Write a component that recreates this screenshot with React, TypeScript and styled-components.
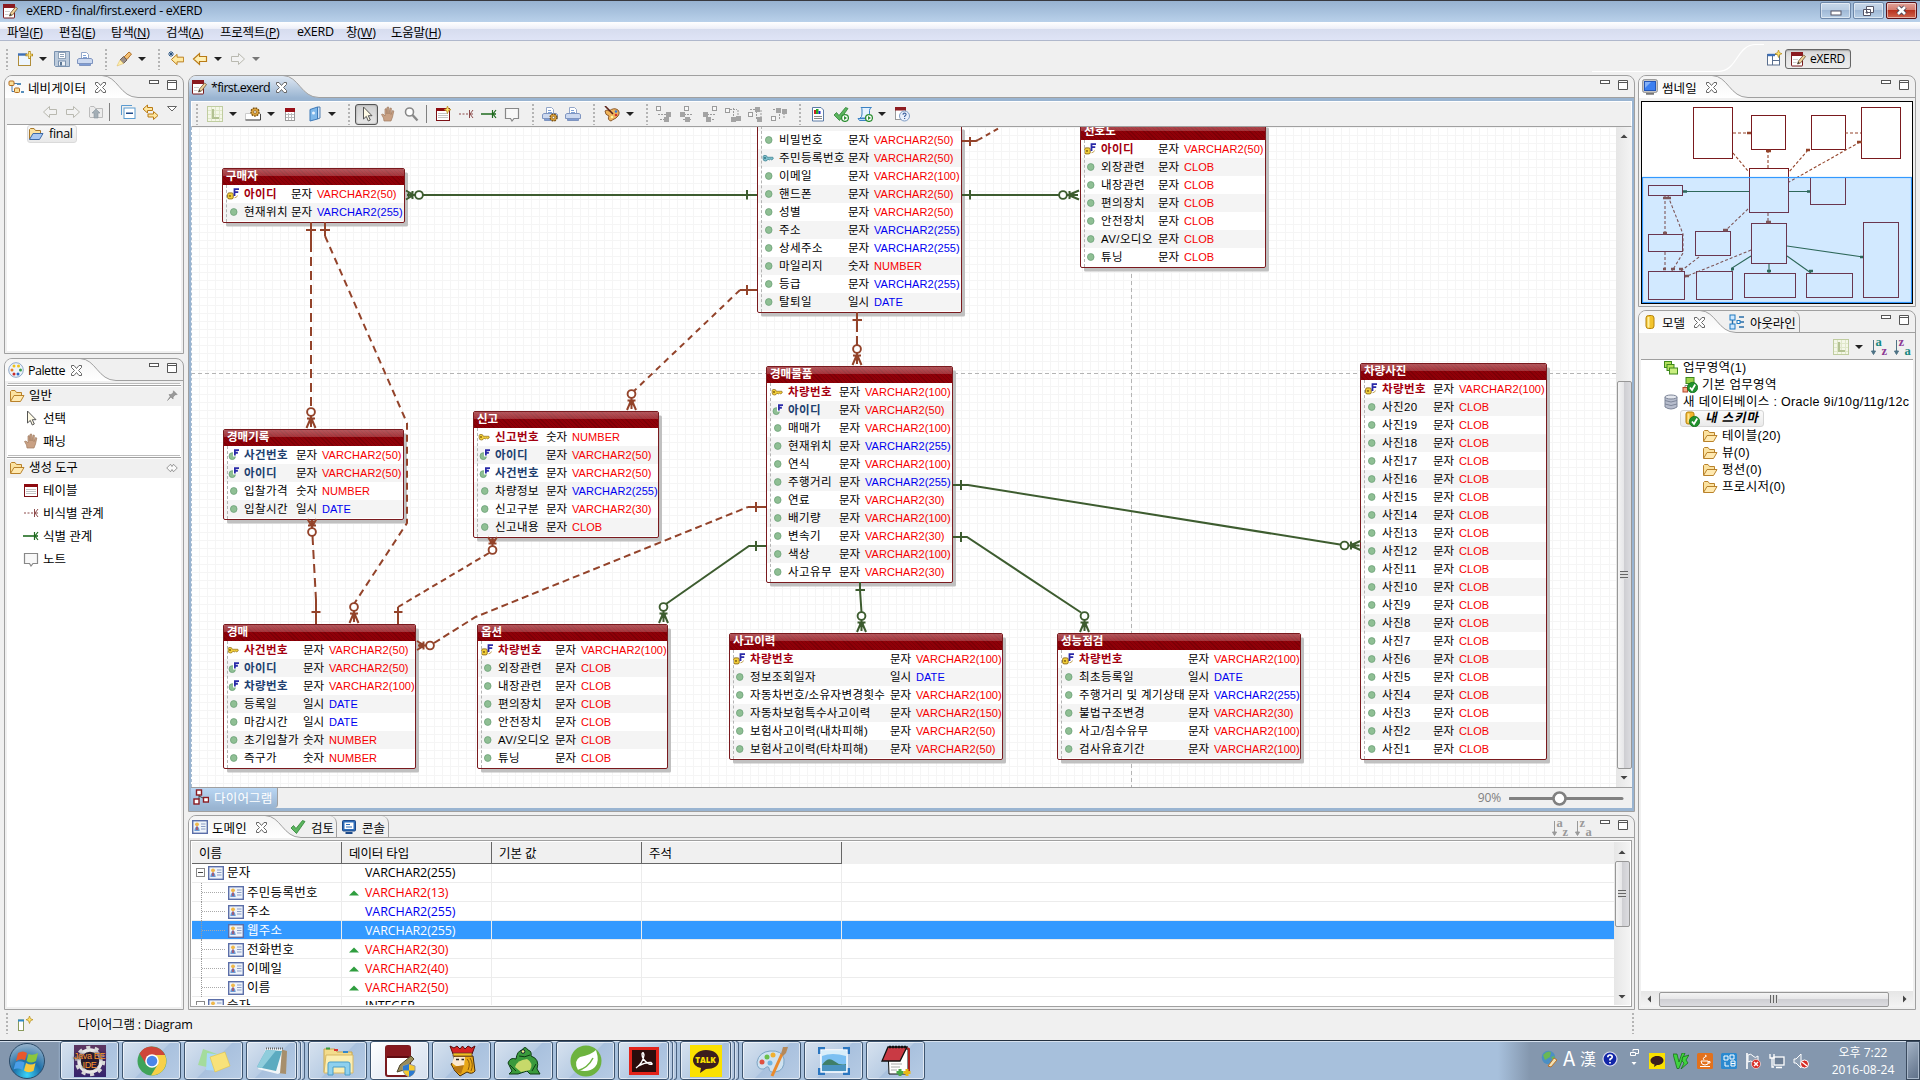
import React from "react";
import styled, { createGlobalStyle, css } from "styled-components";

const UI = '"Open Sans", "Noto Sans CJK KR", sans-serif';
const GULIM = '"Liberation Sans", "Noto Sans CJK KR", sans-serif';
const LINE = "#a0a0a0";
const FACE = "#f0f0f0";
const BROWN = "#93432a";
const GREEN = "#3d5c2f";

const Global = createGlobalStyle`
  * { box-sizing: border-box; }
  html, body { margin: 0; padding: 0; background: ${FACE}; }
  body { width: 1920px; height: 1080px; overflow: hidden; font-family: ${UI}; font-size: 12.5px; color: #000; }
  svg { display: block; flex: none; }
`;

/* ---------- icons ---------- */

type IconName = keyof typeof glyphs;

const arrowLeft = "M1.500 8L7.500 2.500V5.500H14.500V10.500H7.500V13.500Z";
const arrowRight = "M14.500 8L8.500 2.500V5.500H1.500V10.500H8.500V13.500Z";

const folder = (
  <>
    <path d="M1.500 13V3.500L2.500 2.500H6L7.500 4.500H12.500V7" fill="#fbe2a0" stroke="#b9822b" />
    <path d="M1.500 13.500L5 7.500H15L11.500 13.500Z" fill="#ffe9b0" stroke="#b9822b" />
  </>
);
const printer = (
  <>
    <path d="M4.500 8V1.500H9.500L11.500 3.500V8" fill="#fff" stroke="#93a6c8" />
    <path d="M6 4.500H9M6 6.500H10" stroke="#7fa2d6" />
    <path d="M.5 8.500L2 7.500H14L15.500 8.500V12.500H.5Z" fill="#ccd9f0" stroke="#7f95c0" />
    <path d="M2.500 12.500H13.500V14.500H2.500Z" fill="#7f9dd6" stroke="#7f95c0" />
  </>
);
const exerd = (
  <>
    <rect x="1.500" y="1.500" width="11" height="13.500" rx=".5" fill="#fff" stroke="#7a1a1e" />
    <rect x="1" y="1" width="12" height="4" fill="#8b1a20" />
    <path d="M3 8.500H8M3 11.500H6.500" stroke="#cfcfcf" />
    <path d="M7.500 13L8.500 10L13.500 4L15.500 5.500L10.500 12Z" fill="#f0d09a" stroke="#6b5434" strokeWidth=".8" />
    <path d="M7.500 13L8.300 10.700L9.800 12Z" fill="#333" />
  </>
);
const domain = (
  <>
    <rect x=".7" y="1.700" width="14.600" height="12.600" fill="#eef3fa" stroke="#5b6ea8" strokeWidth="1.400" />
    <circle cx="5" cy="5.300" r="1.900" fill="#f0b84a" />
    <path d="M2.300 12Q2.800 7.500 5 7.500T7.700 12Z" fill="#6a9ad5" />
    <path d="M5 7.500V11" stroke="#c22" />
    <path d="M9 5H13.500M9 7.500H13.500M9 10H13.500" stroke="#8b9cc4" />
  </>
);
const cursor = <path d="M4.500 1V13L7.300 10.400L9.300 15L11.300 14L9.300 9.700H13Z" fill="#fffbe6" stroke="#555" />;
const hand = (
  <path d="M4 15L3.500 12L1.500 8.500L3 8L5 10V3L6.300 2.500L7 8V1.300L8.600 1L9 8L10 2L11.400 2.300L11 8.500L12.600 4.500L13.800 5L12.500 11L11 15Z" fill="#c9a184" stroke="#a07c62" strokeWidth=".7" />
);
const note = <path d="M1.500 2.500H14.500V12.500H10L8 15L6.500 12.500H1.500Z" fill="#f8f8f8" stroke="#888" strokeWidth="1.200" />;
const relNon = (
  <>
    <path d="M1 8H10" stroke="#8c4a4a" strokeDasharray="2 1.500" />
    <path d="M11.500 4V12M11.500 8H15M15 4L12 8L15 12" stroke="#8c4a4a" fill="none" />
  </>
);
const relId = (
  <>
    <path d="M0 8H15" stroke="#1f6b1f" strokeWidth="1.600" />
    <path d="M11.500 4V12M15 4L12 8L15 12" stroke="#1f6b1f" fill="none" strokeWidth="1.200" />
  </>
);
const table = (
  <>
    <rect x="1.500" y="2.500" width="13" height="12" fill="#fff" stroke="#7b1116" />
    <rect x="1" y="2" width="14" height="3" fill="#8e0a10" />
    <path d="M3 7.500H13M3 9.500H13M3 11.500H13" stroke="#c4c4c4" />
  </>
);
const sparkle = <path d="M12.500 0L13.500 2.700L16 3.700L13.500 4.700L12.500 7.500L11.500 4.700L9 3.700L11.500 2.700Z" fill="#ffe36a" stroke="#b58b1c" strokeWidth=".7" />;
const gear = (cx: number, cy: number, r: number) => (
  <>
    <circle cx={cx} cy={cy} r={r} fill="#dca23c" stroke="#7d5412" strokeWidth="1.400" strokeDasharray="1.700 1" />
    <circle cx={cx} cy={cy} r={r * 0.35} fill="#fff" stroke="#7d5412" strokeWidth=".7" />
  </>
);
const lgrid = (
  <>
    <rect x=".5" y=".5" width="15" height="15" fill="#f4f7e8" stroke="#c0cda0" />
    <path d="M1 4.500H15M1 8.500H15M1 12.500H15M4.500 1V15M8.500 1V15M12.500 1V15" stroke="#e0e8ca" />
    <path d="M6 3V12H12" stroke="#b3c292" strokeWidth="2.200" fill="none" />
  </>
);
const okBadge = (
  <>
    <circle cx="10.500" cy="10.500" r="5.200" fill="#21912d" stroke="#0e6b18" strokeWidth=".7" />
    <path d="M8 10.500L10 13L13.200 7.500" stroke="#fff" strokeWidth="1.800" fill="none" />
  </>
);
const runBadge = (
  <>
    <circle cx="12" cy="12" r="3.400" fill="#fff" stroke="#2f8f34" strokeWidth="1.300" />
    <path d="M11 10V14L14 12Z" fill="#2f8f34" />
  </>
);
const tick = <path d="M1 9L3.500 6.500L6 9.500L12.500 1.500L15 2.500L6.500 14.500Z" fill="#5cb55f" stroke="#2f8335" strokeWidth=".8" />;

const align = (n: number) => {
  const b = [
    [[1, 1], [10, 6], [8, 11]],
    [[6, 1], [1, 6], [6, 11]],
    [[11, 1], [1, 6], [4, 11]],
    [[1, 3], [11, 10], [6, 11]],
    [[1, 7], [7, 1], [9, 11]],
    [[1, 11], [5, 2], [11, 3]],
  ][n];
  return (
    <>
      {n < 3 ? (
        <path d="M2 8.500H14M4 13.500H12" stroke="#9b9b9b" strokeDasharray="2 1" />
      ) : (
        <path d="M8.500 2V14M13 4V12M2 3.500H12" stroke="#9b9b9b" strokeDasharray="2 1" />
      )}
      <rect x={b[0][0] - 0.5} y={b[0][1] - 0.5} width="4" height="4" fill="#f8f8f8" stroke="#9b9b9b" />
      <rect x={b[1][0]} y={b[1][1]} width="5" height="5" fill="#a3a3a3" />
      <rect x={b[2][0]} y={b[2][1]} width="5" height="5" fill="#a3a3a3" />
    </>
  );
};

const glyphs = {
  exerd,
  folder,
  printer,
  domain,
  cursor,
  hand,
  note,
  relNon,
  relId,
  table,
  lgrid,
  folderOpen: (
    <>
      <path d="M1.500 13V3.500L2.500 2.500H6L7.500 4.500H12.500V7" fill="#fbe2a0" stroke="#a9782b" />
      <path d="M1.500 13.500L5 7.500H15L11.500 13.500Z" fill="#a9c8f2" stroke="#3e6ba8" />
    </>
  ),
  newWizard: (
    <>
      <rect x="1.500" y="3.500" width="12" height="11" fill="#eef6ff" stroke="#b08d3a" />
      <path d="M1 3.500H10" stroke="#3d6fb5" strokeWidth="2.400" />
      <path d="M12.500 0V8M8.500 4H16" stroke="#b58b1c" strokeWidth="2.400" />
      <path d="M12.500 1V7M9.500 4H15" stroke="#ffe98a" />
    </>
  ),
  save: (
    <>
      <path d="M.5 .5H15.500V15.500H1.500L.5 14.500Z" fill="#bccbdc" stroke="#7a92af" />
      <rect x="4.500" y="1.500" width="7" height="6" fill="#fff" stroke="#8da1b7" />
      <path d="M6 3.500H10M6 5.500H10" stroke="#8da1b7" />
      <rect x="4.500" y="10" width="7" height="5" fill="#eef2f6" stroke="#7a92af" />
      <rect x="6" y="11" width="2" height="3.500" fill="#5d7896" />
    </>
  ),
  torch: (
    <>
      <path d="M8 6L13 1L15.500 3L11 8.500Z" fill="#f4c074" stroke="#b1722a" />
      <path d="M4 9L7.500 5.500L11 9L7.500 12.500Z" fill="#9c8f88" stroke="#6f625b" />
      <path d="M1 15L4 9L7.500 12.500Z" fill="#ffefae" stroke="#e0c06a" strokeWidth=".6" />
    </>
  ),
  backEdit: (
    <>
      <path d={arrowLeft} transform="translate(2 1) scale(.94)" fill="#ffe9a0" stroke="#b97b16" />
      <path d="M3 0V6M0 3H6M1 1L5 5M5 1L1 5" stroke="#1f4c7d" strokeWidth=".9" />
    </>
  ),
  back: <path d={arrowLeft} fill="#fff0b5" stroke="#b97b16" strokeWidth="1.200" />,
  backOff: <path d={arrowLeft} fill="#f2f2f2" stroke="#b9b9b0" />,
  fwdOff: <path d={arrowRight} fill="#f2f2f2" stroke="#b9b9b0" />,
  upOff: (
    <>
      <path d="M1.500 13V3.500L2.500 2.500H6L7.500 4.500H14.500V13.500H2Z" fill="#ececec" stroke="#bbb" />
      <path d="M8 5L12 9H10V14H6V9H4Z" fill="#a3aeb6" stroke="#8a959d" strokeWidth=".6" />
    </>
  ),
  collapse: (
    <>
      <path d="M1.500 11V1.500H12" fill="none" stroke="#5b9bd0" />
      <rect x="4" y="4" width="11" height="10.500" fill="#fff" stroke="#5b9bd0" />
      <path d="M6 9.300H13" stroke="#1f4c8d" strokeWidth="1.600" />
    </>
  ),
  link: (
    <>
      <path d="M1 5L5.500 1V3.500H10.500V6.500H5.500V9Z" fill="#ffe7a0" stroke="#b97b16" />
      <path d="M16 11.500L11.500 7.500V10H6V13H11.500V15.500Z" fill="#ffe7a0" stroke="#b97b16" />
    </>
  ),
  navigator: (
    <>
      <path d="M4 6V12.500H8M6 4.500H9" stroke="#4f7ba7" fill="none" />
      <rect x="1" y="2" width="5" height="4.500" rx="1" fill="#fbe09a" stroke="#b36a1c" />
      <rect x="6.500" y="9" width="5" height="4.500" rx="1" fill="#fbe09a" stroke="#b36a1c" />
      <path d="M9 5H13M13 13H16" stroke="#1f6aa5" strokeWidth="1.500" />
    </>
  ),
  paletteRound: (
    <>
      <circle cx="8" cy="8" r="7.300" fill="#eef3fa" stroke="#8fa8c8" />
      <circle cx="6" cy="4" r="1.500" fill="#efc21a" /><circle cx="10.500" cy="4" r="1.500" fill="#efc21a" />
      <circle cx="4" cy="8" r="1.500" fill="#e4822a" /><circle cx="12.500" cy="8" r="1.500" fill="#3aa04a" />
      <circle cx="6" cy="12" r="1.500" fill="#c92b2b" /><circle cx="10" cy="12" r="1.500" fill="#2c66c4" />
    </>
  ),
  pin: <path d="M10 1L15 6L12 6.500L9.500 9.500V12L6.500 9.500L2 14L5.500 8.500L4 6H6.500L9.500 4Z" fill="#999" stroke="#777" strokeWidth=".6" />,
  chevrons: <path d="M6 3L1 8L6 13L8 10L10 13L15 8L10 3L8 6Z" fill="#fafafa" stroke="#777" />,
  gearCard: (
    <>
      <path d="M.5 7.500H15.500V14H.5Z" fill="#fff" stroke="#ccc" />
      <path d="M15.500 8V14H.5" fill="none" stroke="#444" />
      {gear(10, 6, 4)}
    </>
  ),
  smallTable: (
    <>
      <rect x="3.500" y="3.500" width="9" height="11" fill="#fff" stroke="#999" />
      <rect x="3" y="2" width="10" height="4" fill="#9a1018" />
      <path d="M4 8.500H12M4 11.500H12M6.500 7V14M9.500 7V14" stroke="#bbb" />
    </>
  ),
  book: (
    <>
      <path d="M10.500 1H13V12L10.500 13Z" fill="#cfe2f6" stroke="#5480b0" />
      <path d="M3 3.500L10.500 1V13L3 15Z" fill="#7fb8ea" stroke="#3f7ab8" />
      <circle cx="6.500" cy="7" r="1.500" fill="#eaf4ff" />
    </>
  ),
  magnifier: (
    <>
      <circle cx="6.500" cy="6" r="4" fill="#fff" stroke="#888" strokeWidth="1.600" />
      <path d="M9.500 9L14.500 14.500" stroke="#888" strokeWidth="2.400" />
    </>
  ),
  tableNew: <>{table}{sparkle}</>,
  printerGear: <>{printer}{gear(11.5, 11.5, 3.4)}</>,
  paint: (
    <>
      <path d="M1 5Q3 3 5 5Q10 1 14 4Q17 8 12 12Q8 14 7 15Q3 14 5 10Q1 9 1 5Z" fill="#f0b45a" stroke="#8d5a2c" />
      <path d="M1 0L9 8" stroke="#5b2218" strokeWidth="1.600" />
      <circle cx="12" cy="5.500" r="1.300" fill="#3b7ad0" /><circle cx="12" cy="9" r="1.300" fill="#d03030" /><circle cx="8" cy="11" r="1.300" fill="#fff6a0" />
    </>
  ),
  a0: align(0), a1: align(1), a2: align(2), a3: align(3), a4: align(4), a5: align(5),
  report: (
    <>
      <path d="M2.500 1.500H11L13.500 4V15H2.500Z" fill="#fff" stroke="#5a7ba6" />
      <rect x="4" y="4" width="2" height="4" fill="#c22" /><rect x="6" y="3" width="2.500" height="5" fill="#2a2" /><rect x="8.500" y="5" width="2" height="3" fill="#22c" />
      <path d="M4 10.500H12M4 12.500H12" stroke="#888" />
    </>
  ),
  checkRun: <>{tick}{runBadge}</>,
  scriptRun: (
    <>
      <path d="M4 1.500H14.500Q12.500 2 12.500 4.500V12H3Q5 11 5 8V4Q5 2 4 1.500Z" fill="#e4f2ff" stroke="#3b82c4" />
      <path d="M1 12.500H10V14.500H2.500Z" fill="#bfe0fa" stroke="#3b82c4" />
      {runBadge}
    </>
  ),
  helpDoc: (
    <>
      <rect x="1.500" y="1.500" width="10" height="12" fill="#fff" stroke="#999" />
      <rect x="1" y="1" width="11" height="3.500" fill="#8e1c20" />
      <circle cx="10.500" cy="10" r="5" fill="#e9f0fb" stroke="#7f9cc4" />
      <path d="M9 8.700Q9 7.200 10.500 7.200Q12.200 7.200 12 8.700Q11.800 9.600 10.600 10.300V11M10.600 12V13" stroke="#3f64a0" strokeWidth="1.200" fill="none" />
    </>
  ),
  perspective: (
    <>
      <rect x="1.500" y="4.500" width="12" height="10.500" fill="#fff" stroke="#5a6f8e" />
      <path d="M1.500 5H9" stroke="#3c6fb7" strokeWidth="2.400" />
      <path d="M6.500 6V15M6.500 10.500H13.500" stroke="#5a6f8e" />
      {sparkle}
    </>
  ),
  monitor: (
    <>
      <rect x=".7" y=".7" width="14.600" height="12.600" rx="1.500" fill="#d4d4d4" stroke="#8a8a8a" />
      <rect x="2.500" y="2.500" width="11" height="9" fill="#3c7ff0" stroke="#2456b8" />
      <path d="M3 3H9L3 9Z" fill="#84b1f8" />
      <path d="M4 14.800H12" stroke="#777" strokeWidth="1.800" />
    </>
  ),
  model: (
    <>
      <rect x="4" y="1.500" width="8" height="13" rx="2.500" fill="#f2c32c" stroke="#b5830e" />
      <rect x="5.500" y="3" width="2" height="10.500" fill="#fff0a0" />
    </>
  ),
  outline: (
    <>
      <path d="M3.500 5V12M10 3H15M10 8H15M10 13H15" stroke="#2a6ea8" strokeWidth="1.400" />
      <rect x="1" y="1" width="5" height="5" fill="#cfe8ff" stroke="#1d79c0" /><rect x="1" y="10" width="5" height="5" fill="#cfe8ff" stroke="#1d79c0" />
      <rect x="8" y="6.500" width="3" height="3" fill="#fff" stroke="#1d79c0" />
    </>
  ),
  check: tick,
  console: (
    <>
      <rect x="1.500" y="1.500" width="13" height="10.500" rx="1" fill="#2d6cb8" stroke="#1d4a8a" />
      <rect x="3.500" y="3.500" width="9" height="6.500" fill="#fff" />
      <path d="M5 5.500H9M5 8H11" stroke="#2d6cb8" />
      <path d="M4.500 14H11.500" stroke="#1d4a8a" strokeWidth="1.800" />
    </>
  ),
  area: (
    <>
      <rect x="1.500" y="1.500" width="7" height="6" fill="#b4e05c" stroke="#3f8a1b" />
      <rect x="4" y="4.500" width="7" height="6" fill="#b4e05c" stroke="#3f8a1b" />
      <rect x="6.500" y="8" width="8" height="6" fill="#c9ee80" stroke="#3f8a1b" />
    </>
  ),
  areaOk: (
    <>
      <rect x="4" y="0.500" width="8" height="6" fill="#9ed24c" stroke="#3f8a1b" />
      <rect x="1" y="10.500" width="4.500" height="4.500" fill="#f6a888" stroke="#b5482a" />
      <path d="M8 7V9M3 10V8.500H8" stroke="#888" fill="none" />
      {okBadge}
    </>
  ),
  database: (
    <>
      <path d="M2 3V13Q8 17 14 13V3Z" fill="#b6bccc" stroke="#7d8598" />
      <ellipse cx="8" cy="3" rx="6" ry="2" fill="#e4e7ee" stroke="#7d8598" />
      <path d="M2 6.500Q8 9.500 14 6.500M2 10Q8 13 14 10" stroke="#7d8598" fill="none" />
    </>
  ),
  schemaOk: (
    <>
      <rect x="2" y="1" width="8" height="12" rx="2" fill="#f2b52c" stroke="#b5830e" />
      <rect x="3.500" y="2.500" width="2" height="9" fill="#ffe690" />
      {okBadge}
    </>
  ),
  diagram: (
    <>
      <path d="M6 5V10M6 7L12 10" stroke="#444" fill="none" />
      <rect x="3.500" y="1" width="5" height="5" fill="#fff" stroke="#8b1a20" strokeWidth="1.400" />
      <rect x="1" y="10" width="5" height="5" fill="#fff" stroke="#8b1a20" strokeWidth="1.400" />
      <rect x="10.500" y="8.500" width="5" height="4.500" fill="#fff" stroke="#8b1a20" strokeWidth="1.400" />
    </>
  ),
  statusNew: (
    <>
      <rect x="1.500" y="4" width="5" height="10.500" fill="#fff" stroke="#8a9a5c" />
      <path d="M1 4.500H7" stroke="#2d8ac8" strokeWidth="2" />
      {sparkle}
    </>
  ),
  dot: <ellipse cx="9" cy="8" rx="4.400" ry="4.600" fill="#8fbf94" stroke="#6a9f76" strokeWidth="1" />,
  key: (
    <>
      <path d="M1.500 6Q1.500 4.500 4 4.500Q7 4.500 7 7H14.500L15 9L13 10.500L11.500 9.500L10 10.500L8 9.500Q7 12 4.500 12Q1.500 12 1.500 9Z" fill="#f2cf3a" stroke="#94701a" />
      <circle cx="4" cy="8" r="1.200" fill="#7a5a10" />
    </>
  ),
  ukey: (
    <>
      <path d="M1.500 6Q1.500 4.500 4 4.500Q7 4.500 7 7H14.500L15 9L13 10.500L11.500 9.500L10 10.500L8 9.500Q7 12 4.500 12Q1.500 12 1.500 9Z" fill="#7cc0cc" stroke="#3b7f90" />
      <circle cx="4" cy="8" r="1.200" fill="#2d6a78" />
    </>
  ),
  fk: (
    <>
      <ellipse cx="7" cy="9.500" rx="4.300" ry="4.600" fill="#8fbf94" stroke="#6a9f76" />
      <path d="M8 0H16V3H12V5H15V7.500H12V10H8Z" fill="#fff" />
      <path d="M10.500 8.500V1.500H16M10 5H14.500" stroke="#2a2aa8" strokeWidth="2.400" fill="none" />
    </>
  ),
  pfk: (
    <>
      <rect x=".8" y="6.500" width="7.500" height="8" rx="2" fill="#f2cf3a" stroke="#94701a" strokeWidth="1.300" />
      <circle cx="4" cy="10.500" r="1.300" fill="#7a5a10" />
      <path d="M10 10.500V1.500H16M10 5.500H15" stroke="#2a2aa8" strokeWidth="2.400" fill="none" />
      <path d="M10 13Q13 13 14 10" stroke="#b18a20" fill="none" />
    </>
  ),
};

const Icon = ({ n, s = 16 }: { n: IconName; s?: number }) => (
  <svg width={s} height={s} viewBox="0 0 16 16" fill="none">{glyphs[n]}</svg>
);

const SortBox = styled.span<{ $off?: boolean }>`
  display: grid; grid-template-columns: 5px 6px 6px; grid-template-rows: 9px 9px; width: 17px; height: 18px; margin-top: ${(p) => (p.$off ? 3 : 0)}px;
  font: bold 12.5px/9px "Liberation Serif", serif; color: ${(p) => (p.$off ? "#9a9a9a" : "#16877f")};
  svg { grid-row: 1 / 3; }
  i { font-style: normal; }
  i + i { grid-column: 3; grid-row: 2; color: ${(p) => (p.$off ? "#9a9a9a" : "#8d3b94")}; }
  &[data-rev] i { color: ${(p) => (p.$off ? "#9a9a9a" : "#8d3b94")}; }
  &[data-rev] i + i { color: ${(p) => (p.$off ? "#9a9a9a" : "#16877f")}; }
`;
const Sort = ({ rev, off }: { rev?: boolean; off?: boolean }) => (
  <SortBox $off={off} data-rev={rev ? "" : undefined}>
    <svg width="5" height="18" viewBox="0 0 5 18"><path d="M2.500 2V15M.5 13L2.500 16.500L4.500 13Z" stroke={off ? "#999" : "#4f7385"} fill={off ? "#999" : "#4f7385"} /></svg>
    <i>{rev ? "z" : "a"}</i><i>{rev ? "a" : "z"}</i>
  </SortBox>
);

/* ---------- toolbar parts ---------- */

const Slot = styled.span<{ $g?: number; $w?: number }>`
  flex: none; display: flex; justify-content: center; align-items: center;
  width: ${(p) => p.$w ?? 16}px; margin-left: ${(p) => p.$g ?? 7}px;
`;
const GripLine = styled.span<{ $g: number; $h?: number }>`
  flex: none; width: 4px; height: ${(p) => p.$h ?? 21}px; margin-left: ${(p) => p.$g}px;
  background: repeating-linear-gradient(#b4b4b4 0 2px, transparent 2px 4px) 1px 0 / 2px 100% no-repeat;
`;
const Sep = styled.span<{ $g: number }>`
  flex: none; width: 2px; height: 18px; margin-left: ${(p) => p.$g}px; border-left: 1px solid #808080;
`;
const Caret = styled.span<{ $g: number; $off?: boolean }>`
  flex: none; width: 8px; height: 4px; margin-left: ${(p) => p.$g}px;
  background: ${(p) => (p.$off ? "#777" : "#222")}; clip-path: polygon(0 0, 100% 0, 50% 100%);
`;
const Tool = ({ n, g }: { n: IconName; g?: number }) => <Slot $g={g}><Icon n={n} /></Slot>;

/* ---------- window frame ---------- */

const Window = styled.div`
  width: 1920px; height: 1080px; display: flex; flex-direction: column; background: ${FACE}; overflow: hidden; white-space: nowrap;
`;
const TitleBar = styled.header`
  height: 22px; border-top: 1px solid #38393f; background: linear-gradient(#97b2d1, #b9d1ea);
  display: flex; align-items: center; padding: 0 3px 2px 2px; letter-spacing: -0.3px;
  > span { margin-left: 8px; flex: 1; }
`;
const WinButton = styled.button<{ $close?: boolean }>`
  width: 31px; height: 17px; margin-left: 2px; padding: 0; border-radius: 2px; display: flex; align-items: center; justify-content: center;
  border: 1px solid ${(p) => (p.$close ? "#5a1016" : "#6d87a8")};
  box-shadow: inset 0 0 0 1px rgba(255, 255, 255, 0.5);
  background: ${(p) => p.$close ? "linear-gradient(#e0a39a, #d3796b 48%, #b8321f 50%, #d0654e)" : "linear-gradient(#c8d8ea, #b8cce2 48%, #a0b9d6 50%, #b8cfe6)"};
`;
const MenuBar = styled.nav`
  height: 19px; background: linear-gradient(#fff, #eef0f8 36%, #d6dcee 38%, #dfe4f6); border-bottom: 1px solid #b0b8cc;
  display: flex; align-items: center; padding-left: 7px;
`;
const MenuItem = styled.span<{ $w: number }>`flex: none; width: ${(p) => p.$w}px; letter-spacing: -0.2px;`;
const MainBar = styled.div`
  height: 34px; display: flex; align-items: center; padding-top: 2px;
`;
const PerspectiveBar = styled.div`
  margin-left: auto; display: flex; align-items: center; height: 34px; margin-top: -2px; width: 328px;
  > svg:first-child { margin-right: 2px; }
`;
const PerspectiveButton = styled.button`
  width: 66px; height: 20px; margin: 1px 0 0 3px; padding: 0 0 0 4px; display: flex; align-items: center; gap: 4px;
  border: 1px solid #666; border-radius: 3px; background: linear-gradient(#d4d4d4, #e4e4e4 40%, #ededed);
  box-shadow: inset 0 1px 1px #aaa; font: 12px ${UI}; letter-spacing: -0.3px; color: #000;
`;
const Workbench = styled.main`
  height: 935px; display: flex; padding: 0 4px 0 4px;
`;
const Column = styled.div<{ $w: number; $ml?: number; $gap: number }>`
  flex: none; width: ${(p) => p.$w}px; margin-left: ${(p) => p.$ml ?? 0}px; display: flex; flex-direction: column; gap: ${(p) => p.$gap}px;
`;
const Panel = styled.section<{ $h: number }>`
  flex: none; height: ${(p) => p.$h}px; border: 1px solid ${LINE}; border-radius: 8px 8px 0 0; background: ${FACE};
  display: flex; flex-direction: column; overflow: hidden;
`;
const Head = styled.div`
  flex: none; height: 22px; display: flex; align-items: stretch;
`;
const Tab = styled.div<{ $blue?: boolean; $w: number; $ls?: number; $x?: number }>`
  width: ${(p) => p.$w}px; flex: none; display: flex; align-items: center; padding-left: ${(p) => (p.$blue ? 2 : 3)}px; letter-spacing: ${(p) => p.$ls ?? 0.1}px;
  background: ${(p) => (p.$blue ? "linear-gradient(#dfe8f3, #99b4d1)" : "linear-gradient(#f4f4f4, #fff)")};
  > b { font-weight: 400; margin: 0 ${(p) => p.$x ?? 9}px 0 4px; }
  > svg { position: relative; z-index: 1; }
`;
const HeadRest = styled.div`
  flex: 1; border-bottom: 1px solid ${LINE}; display: flex; align-items: flex-start; min-width: 0;
`;
const IdleTab = styled.div<{ $w: number; $ml?: number }>`
  width: ${(p) => p.$w}px; margin-left: ${(p) => p.$ml ?? 0}px; height: 21px; display: flex; align-items: center; gap: 5px;
  border-right: 1px solid ${LINE}; border-radius: 0 7px 0 0; padding-top: 1px; letter-spacing: -0.1px;
`;
const ViewButtons = styled.div`
  margin-left: auto; display: flex; gap: 8px; padding: 4px 6px 0 0;
`;
const CloseX = () => (
  <svg width="11" height="11" viewBox="0 0 11 11"><path d="M.5 .5H3L5.500 3.500L8 .5H10.500V2.500L7.500 5.500L10.500 8.500V10.500H8L5.500 7.500L3 10.500H.5V8.500L3.500 5.500L.5 2.500Z" fill="#fff" stroke="#666" /></svg>
);
const MinMax = () => (
  <ViewButtons>
    <svg width="10" height="5"><rect x=".5" y=".5" width="9" height="3" fill="#fff" stroke="#555" /></svg>
    <svg width="10" height="10"><path d="M.5 .5H9.500V9.500H.5ZM.5 2.500H9.500" fill="#fff" stroke="#555" /></svg>
  </ViewButtons>
);
const Curve = ({ blue }: { blue?: boolean }) => (
  <svg width="36" height="22" viewBox="0 0 36 22">
    <defs>
      <linearGradient id={blue ? "cb" : "cw"} x1="0" y1="0" x2="0" y2="1">
        <stop offset="0" stopColor={blue ? "#dfe8f3" : "#f4f4f4"} /><stop offset="1" stopColor={blue ? "#99b4d1" : "#fff"} />
      </linearGradient>
    </defs>
    <path d="M0 0C16 0 18 21.500 36 21.500V22H0Z" fill={`url(#${blue ? "cb" : "cw"})`} />
    <path d="M0 -.5C16 0 18 21.500 36 21.500" fill="none" stroke={LINE} />
  </svg>
);

const White = styled.div<{ $bare?: boolean }>`
  flex: 1; background: #fff; margin: ${(p) => (p.$bare ? 3 : 0)}px 2px 2px; border-top: ${(p) => (p.$bare ? "0" : `1px solid ${LINE}`)};
  min-height: 0; display: flex; flex-direction: column;
`;
const ViewBar = styled.div<{ $h: number }>`
  flex: none; height: ${(p) => p.$h}px; display: flex; align-items: center; padding-top: 2px;
`;
const FinalNode = styled.div`
  width: 50px; height: 18px; margin: 0 0 0 20px; display: flex; align-items: center; gap: 5px; border: 1px solid #dadada; border-radius: 3px;
  background: linear-gradient(#f8f8f8, #e9e9e9); letter-spacing: -0.3px; line-height: 14px; padding-bottom: 1px;
`;

/* ---------- palette ---------- */

const Drawer = styled.div<{ $h: number }>`
  height: ${(p) => p.$h}px; margin-top: 1px; border-top: 1px solid ${LINE}; box-shadow: 0 -2px 0 -1px #fff, 0 -3px 0 -1px #bbb; padding-top: 1px;
`;
const DrawerHead = styled.div`
  height: 19px; background: ${FACE}; display: flex; align-items: center; padding: 0 0 2px 2px; letter-spacing: -0.1px;
  > b { font-weight: 400; flex: 1; margin-left: 4px; line-height: 16px; }
`;
const PaletteItem = styled.div`
  height: 23px; display: flex; align-items: center; gap: 4px; padding-left: 16px; letter-spacing: 0;
`;

/* ---------- diagram ---------- */

type Kind = "dot" | "key" | "ukey" | "fk" | "pfk";
type Col = [Kind, string, string, string];
interface Entity { t: string; x: number; y: number; w: number; n: number; k: number; d: number; cols: Col[]; cut?: boolean }

const V = (n: number) => `VARCHAR2(${n})`;
const M = "문자";
const clobs = (names: string[]): Col[] => names.map((s) => ["dot", s, M, "CLOB"]);
const options = ["외장관련", "내장관련", "편의장치", "안전장치", "AV/오디오", "튜닝"];

const entities: Entity[] = [
  { t: "구매자", x: 222, y: 168, w: 183, n: 244, k: 291, d: 317, cols: [["pfk", "아이디", M, V(50)], ["dot", "현재위치", M, V(255)]] },
  { t: "", cut: true, x: 757, y: 125, w: 205, n: 779, k: 848, d: 874, cols: [
    ["dot", "비밀번호", M, V(50)], ["ukey", "주민등록번호", M, V(50)], ["dot", "이메일", M, V(100)], ["dot", "핸드폰", M, V(50)], ["dot", "성별", M, V(50)],
    ["dot", "주소", M, V(255)], ["dot", "상세주소", M, V(255)], ["dot", "마일리지", "숫자", "NUMBER"], ["dot", "등급", M, V(255)], ["dot", "탈퇴일", "일시", "DATE"]] },
  { t: "선호도", x: 1080, y: 123, w: 186, n: 1101, k: 1158, d: 1184, cols: [["pfk", "아이디", M, V(50)], ...clobs(options)] },
  { t: "경매기록", x: 223, y: 429, w: 181, n: 244, k: 296, d: 322, cols: [["fk", "사건번호", M, V(50)], ["fk", "아이디", M, V(50)], ["dot", "입찰가격", "숫자", "NUMBER"], ["dot", "입찰시간", "일시", "DATE"]] },
  { t: "신고", x: 473, y: 411, w: 186, n: 495, k: 546, d: 572, cols: [["key", "신고번호", "숫자", "NUMBER"], ["fk", "아이디", M, V(50)], ["fk", "사건번호", M, V(50)], ["dot", "차량정보", M, V(255)], ["dot", "신고구분", M, V(30)], ["dot", "신고내용", M, "CLOB"]] },
  { t: "경매", x: 223, y: 624, w: 193, n: 244, k: 303, d: 329, cols: [["key", "사건번호", M, V(50)], ["fk", "아이디", M, V(50)], ["fk", "차량번호", M, V(100)], ["dot", "등록일", "일시", "DATE"], ["dot", "마감시간", "일시", "DATE"], ["dot", "초기입찰가", "숫자", "NUMBER"], ["dot", "즉구가", "숫자", "NUMBER"]] },
  { t: "옵션", x: 477, y: 624, w: 191, n: 498, k: 555, d: 581, cols: [["pfk", "차량번호", M, V(100)], ...clobs(options)] },
  { t: "경매물품", x: 766, y: 366, w: 187, n: 788, k: 839, d: 865, cols: [["key", "차량번호", M, V(100)], ["fk", "아이디", M, V(50)], ["dot", "매매가", M, V(100)], ["dot", "현재위치", M, V(255)], ["dot", "연식", M, V(100)], ["dot", "주행거리", M, V(255)], ["dot", "연료", M, V(30)], ["dot", "배기량", M, V(100)], ["dot", "변속기", M, V(30)], ["dot", "색상", M, V(100)], ["dot", "사고유무", M, V(30)]] },
  { t: "사고이력", x: 729, y: 633, w: 274, n: 750, k: 890, d: 916, cols: [["pfk", "차량번호", M, V(100)], ["dot", "정보조회일자", "일시", "DATE"], ["dot", "자동차번호/소유자변경횟수", M, V(100)], ["dot", "자동차보험특수사고이력", M, V(150)], ["dot", "보험사고이력(내차피해)", M, V(50)], ["dot", "보험사고이력(타차피해)", M, V(50)]] },
  { t: "성능점검", x: 1057, y: 633, w: 244, n: 1079, k: 1188, d: 1214, cols: [["pfk", "차량번호", M, V(100)], ["dot", "최초등록일", "일시", "DATE"], ["dot", "주행거리 및 계기상태", M, V(255)], ["dot", "불법구조변경", M, V(30)], ["dot", "사고/침수유무", M, V(100)], ["dot", "검사유효기간", M, V(100)]] },
  { t: "차량사진", x: 1360, y: 363, w: 187, n: 1382, k: 1433, d: 1459, cols: [["pfk", "차량번호", M, V(100)], ...clobs(Array.from({ length: 20 }, (_, i) => `사진${20 - i}`))] },
];

const OX = 191;
const OY = 127;

const Canvas = styled.div`
  position: relative; flex: 1; overflow: hidden; background: #fff; border-left: 1px dashed #a9bcd0;
  > svg { position: absolute; left: -1px; top: 0; }
`;
const EntityBox = styled.article<{ $x: number; $y: number; $w: number }>`
  position: absolute; left: ${(p) => p.$x - OX - 1}px; top: ${(p) => p.$y - OY}px; width: ${(p) => p.$w}px;
  border: 1px solid #7a1a1e; border-radius: 2px; box-shadow: 3.5px 4px 0 -0.5px #c0c0c0; background: #fff; font-family: ${GULIM}; overflow: hidden;
`;
const EntityTitle = styled.h3`
  margin: 0; height: 16px; padding-left: 3px; color: #fff; font: bold 11.5px/15px ${GULIM}; letter-spacing: 0;
  background: linear-gradient(rgba(255, 255, 255, 0.34), rgba(255, 255, 255, 0.2) 45%, transparent 46%),
    repeating-linear-gradient(45deg, #8f0008 0 2px, #7c0006 2px 3px);
`;
const CutRow = styled.div`height: 5px; background: #f4f4f4;`;
const Fields = styled.div`
  position: relative; padding-bottom: 1px;
  &::before { content: ""; position: absolute; left: 3px; top: 0; bottom: 0; border-left: 1px dashed #b5b5b5; z-index: 1; }
`;
const nameTone = css<{ $kind: Kind }>`
  ${(p) => (p.$kind === "key" || p.$kind === "pfk") && css`font-weight: 700; color: #a3000f;`}
  ${(p) => p.$kind === "fk" && css`font-weight: 700; color: #21406f;`}
`;
const Field = styled.div<{ $cols: string; $alt: boolean }>`
  display: grid; grid-template-columns: ${(p) => p.$cols}; height: 18px; align-items: center; padding-bottom: 1px;
  background: ${(p) => (p.$alt ? "#f4f4f4" : "#fff")}; font-size: 11.5px; line-height: 16px;
  > svg { justify-self: end; margin: 0 5px 0 0; }
`;
const FieldName = styled.span<{ $kind: Kind }>`letter-spacing: 0.4px; ${nameTone}`;
const DataType = styled.span<{ $blue: boolean }>`
  font-size: 11px; letter-spacing: 0.08px; color: ${(p) => (p.$blue ? "#0000f0" : "#f60000")};
`;

const EntityView = ({ e }: { e: Entity }) => (
  <EntityBox $x={e.x} $y={e.y} $w={e.w}>
    {!e.cut && <EntityTitle>{e.t}</EntityTitle>}
    <Fields>
      {e.cut && <CutRow />}
      {e.cols.map(([kind, name, group, type], i) => (
        <Field key={i} $alt={i % 2 === 1} $cols={`${e.n - e.x - 1}px ${e.k - e.n}px ${e.d - e.k}px 1fr`}>
          <Icon n={kind} s={12} />
          <FieldName $kind={kind}>{name}</FieldName>
          <span>{group}</span>
          <DataType $blue={type === "DATE" || type === "VARCHAR2(255)"}>{type}</DataType>
        </Field>
      ))}
    </Fields>
  </EntityBox>
);

const Crow = ({ x, y, r, l = 12, c }: { x: number; y: number; r: number; l?: number; c: string }) => (
  <g transform={`translate(${x} ${y}) rotate(${r})`} stroke={c} fill="none">
    <path d={`M4 0H${l + 3}M6.500 -4V4M5.500 0L${l + 4} -4.500M5.500 0L${l + 4} 4.500`} strokeWidth="2" />
    <path d="M7 -2L11 2M7 2L11 -2" strokeWidth="1.500" />
    <circle r="3.900" fill="#fff" strokeWidth="1.900" />
  </g>
);

const Grid = () => {
  let d = "";
  for (let i = 0; i < 178; i++) d += `M${Math.round(191 + i * 8.1) + 0.5} 127V787`;
  for (let i = 0; i < 83; i++) d += `M191 ${Math.round(126.5 + i * 8.1) + 0.5}H1616`;
  return (
    <svg width="1425" height="660" viewBox="191 127 1425 660" fill="none">
      <path d={d} stroke="#f5f5f5" />
      <path d="M191 373.500H1616M1131.500 127V787" stroke="#b4b4b4" strokeDasharray="4 3" />
    </svg>
  );
};

const Links = () => (
  <svg width="1425" height="660" viewBox="191 127 1425 660" fill="none">
    <g stroke={BROWN} strokeWidth="2">
      <path d="M311 222V243M306 230H316M325 222V236M320 230H330M316 600V624M311.500 612H320.500M398 607V624M394 612H402.500M748 507H766M756 502V512M740 290H757M747 285V295M857 312V332M852.500 320H862M962 141H976L978 140M970 137V146" />
      <g strokeDasharray="9 5">
        <path d="M311 243V408" />
        <path d="M325 236L407 423V523L354 604" strokeDasharray="7 5" />
        <path d="M312.500 536L316 600" />
        <path d="M489 553L398 607" strokeDasharray="6 4" />
        <path d="M434 643L475.500 617L748 507" strokeDasharray="7 4" />
        <path d="M740 290L634 391" strokeDasharray="6 5" />
        <path d="M857 336V346" />
        <path d="M978 140L1001 127" strokeDasharray="5 4" />
      </g>
    </g>
    <g stroke={GREEN} strokeWidth="2">
      <path d="M423 195H757M747 190V199.500M962 195H1060M970 190V199.500" />
      <path d="M766 546H749L666 604M756 541V551M860 582V590L861.500 612M855.500 590H865M953 537H967L1081 612.500M961 532V542M953 485H968L1340 544.500M961 480V490" />
    </g>
    <Crow x={311} y={412} r={90} c={BROWN} />
    <Crow x={354} y={607} r={90} c={BROWN} />
    <Crow x={312} y={532} r={-90} l={9} c={BROWN} />
    <Crow x={492.5} y={550} r={-90} l={9} c={BROWN} />
    <Crow x={430} y={645.5} r={180} l={9} c={BROWN} />
    <Crow x={631.5} y={394} r={90} c={BROWN} />
    <Crow x={857} y={349} r={90} c={BROWN} />
    <Crow x={419} y={195} r={180} l={9} c={GREEN} />
    <Crow x={1063} y={195} r={0} c={GREEN} />
    <Crow x={663.5} y={607} r={90} c={GREEN} />
    <Crow x={861.5} y={616} r={90} c={GREEN} />
    <Crow x={1084.5} y={616} r={90} c={GREEN} />
    <Crow x={1344.5} y={545.5} r={0} c={GREEN} />
  </svg>
);

/* ---------- scrollbars ---------- */

const Track = styled.div<{ $h?: boolean }>`
  flex: none; display: flex; align-items: center;
  ${(p) => (p.$h
    ? "flex-direction: row; height: 16px; margin-top: auto; background: linear-gradient(#e6e6e6, #f4f4f4);"
    : "flex-direction: column; width: 16px; background: linear-gradient(90deg, #e6e6e6, #f4f4f4);")}
`;
const Thumb = styled.div<{ $h?: boolean; $len: number; $at: number }>`
  border: 1px solid #979797; border-radius: 2px; display: flex; align-items: center; justify-content: center; flex: none;
  ${(p) => p.$h
    ? css`height: 15px; width: ${p.$len}px; margin-left: ${p.$at}px; background: linear-gradient(#f4f4f4, #e6e6e8 48%, #cfcfd3 50%, #dcdce0);`
    : css`width: 15px; height: ${p.$len}px; margin-top: ${p.$at}px; background: linear-gradient(90deg, #f4f4f4, #e6e6e8 48%, #cfcfd3 50%, #dcdce0);`}
`;
const ThumbGrip = styled.i<{ $h?: boolean }>`
  width: 8px; height: 8px; background: repeating-linear-gradient(${(p) => (p.$h ? "90deg" : "180deg")}, #666 0 1px, #ddd 1px 3px);
`;
const Arrow = ({ d }: { d: "up" | "down" | "left" | "right" }) => (
  <svg width="8" height="8" viewBox="0 0 8 8">
    <path d={{ up: "M0.500 6H7.500L4 2.500Z", down: "M0.500 2H7.500L4 5.500Z", left: "M6 0.500V7.500L2.500 4Z", right: "M2 0.500V7.500L5.500 4Z" }[d]} fill="#444" />
  </svg>
);
const ArrowSlot = styled.span<{ $h: number; $end?: boolean }>`
  height: ${(p) => p.$h}px; display: flex; align-items: center; ${(p) => p.$end && "margin-top: auto;"}
`;

/* ---------- editor ---------- */

const BlueFrame = styled.div`
  flex: 1; border: solid #99b4d1; border-width: 3px 2px 3px 2px; display: flex; flex-direction: column; min-height: 0;
`;
const EditorBar = styled.div`
  flex: none; height: 26px; display: flex; align-items: center; border: 1px solid #fff; border-bottom-color: ${LINE};
`;
const PressedTool = styled.span`
  flex: none; width: 23px; height: 21px; margin-left: 4px; display: flex; align-items: center; justify-content: center;
  border: 1px solid #555; border-radius: 3px; background: linear-gradient(#d0d0d0, #e8e8e8); box-shadow: inset 0 0 2px #888;
`;
const Sheet = styled.div`height: 660px; flex: none; display: flex; align-items: stretch;`;
const EditorFoot = styled.div`
  flex: 1; border-top: 1px solid ${LINE}; display: flex; align-items: center; min-height: 0;
`;
const PageTab = styled.div`
  width: 87px; height: 100%; background: linear-gradient(#b9d6f3, #99b4d1); color: #fff; display: flex; align-items: center; gap: 5px; padding: 0 0 2px 2px;
  border-right: 1px solid ${LINE}; border-radius: 0 0 4px 0; letter-spacing: 0.2px;
`;
const ZoomLabel = styled.span`margin-left: auto; color: #808080; font-size: 12px; letter-spacing: -0.1px; margin-right: 8px; padding-bottom: 1px;`;

const Editor = () => (
  <Panel $h={737}>
    <Head>
      <Tab $blue $w={94} $ls={-0.62} $x={6}><Icon n="exerd" /><b>*first.exerd</b><CloseX /></Tab>
      <Curve blue />
      <HeadRest><MinMax /></HeadRest>
    </Head>
    <BlueFrame>
      <EditorBar>
        <GripLine $g={3} /><Tool n="lgrid" g={8} /><Caret $g={6} /><Tool n="gearCard" g={8} /><Caret $g={6} /><Tool n="smallTable" g={7} /><Tool n="book" g={9} /><Caret $g={5} />
        <GripLine $g={11} /><PressedTool><Icon n="cursor" /></PressedTool><Tool n="hand" g={2} /><Tool n="magnifier" /><Sep $g={7} />
        <Tool n="tableNew" /><Tool n="relNon" /><Tool n="relId" /><Tool n="note" />
        <GripLine $g={11} /><Tool n="printerGear" /><Tool n="printer" />
        <GripLine $g={11} /><Tool n="paint" g={8} /><Caret $g={6} />
        <GripLine $g={11} /><Tool n="a0" /><Tool n="a1" /><Tool n="a2" /><Tool n="a3" /><Tool n="a4" /><Tool n="a5" />
        <GripLine $g={11} /><Tool n="report" g={8} /><Tool n="checkRun" /><Tool n="scriptRun" g={8} /><Caret $g={5} /><Tool n="helpDoc" g={8} />
      </EditorBar>
      <Sheet>
        <Canvas>
          <Grid />
          {entities.map((e) => <EntityView key={e.t} e={e} />)}
          <Links />
        </Canvas>
        <Track>
          <ArrowSlot $h={17}><Arrow d="up" /></ArrowSlot>
          <Thumb $len={388} $at={237}><ThumbGrip /></Thumb>
          <ArrowSlot $h={18} $end><Arrow d="down" /></ArrowSlot>
        </Track>
      </Sheet>
      <EditorFoot>
        <PageTab><Icon n="diagram" /><span>다이어그램</span></PageTab>
        <ZoomLabel>90%</ZoomLabel>
        <svg width="123" height="18" viewBox="0 0 123 18"><path d="M1 9.500H113" stroke="#808080" strokeWidth="3" strokeLinecap="round" /><circle cx="50.500" cy="9.500" r="6" fill="#fff" stroke="#808080" strokeWidth="2.600" /></svg>
      </EditorFoot>
    </BlueFrame>
  </Panel>
);

/* ---------- domain view ---------- */

const DomainFrame = styled.div`
  flex: 1; margin: 2px 2px 2px 1px; border: 1px solid ${LINE}; background: #fff; padding: 1px; display: flex; min-height: 0;
`;
const DomainTable = styled.div`flex: 1; overflow: hidden; min-width: 0; display: flex; flex-direction: column;`;
const cells = css`display: grid; grid-template-columns: 150px 150px 150px 200px 1fr;`;
const DomainHead = styled.div`
  ${cells} flex: none; height: 22px; background: ${FACE};
  > span { height: 22px; padding-left: 7px; line-height: 23px; border-right: 1px solid #666; border-bottom: 1px solid #666; letter-spacing: -0.1px; }
`;
const DomainRow = styled.div<{ $sel?: boolean }>`
  ${cells} flex: none; height: 19px; border-bottom: 1px solid #ececec;
  background: ${(p) => (p.$sel ? "#3399ff" : "#fff")};
  > span { border-right: 1px solid #ececec; display: flex; align-items: center; min-width: 0; line-height: 16px; padding-bottom: 1px; }
  > span:last-child { border-right: 0; }
`;
const NameCell = styled.span<{ $root?: boolean; $sel?: boolean }>`
  gap: 3px; color: ${(p) => (p.$sel ? "#fff" : "#000")}; letter-spacing: 0.3px;
  padding-left: ${(p) => (p.$root ? 4 : 9)}px;
`;
const TreeLead = styled.i`
  width: 24px; height: 19px; flex: none; border-left: 1px dotted #999;
  background: repeating-linear-gradient(90deg, #aaa 0 1px, transparent 1px 2px) 0 9px / 100% 1px no-repeat;
`;
const Expander = styled.i`
  width: 9px; height: 9px; flex: none; border: 1px solid #888; background: linear-gradient(#444, #444) 1px 3px / 5px 1px no-repeat #fff;
`;
const TypeCell = styled.span<{ $c: string }>`
  padding-left: 7px; gap: 6px; color: ${(p) => p.$c}; letter-spacing: -0.1px;
`;
const domainRows: [string, string, string, boolean][] = [
  ["문자", "VARCHAR2(255)", "#000", false],
  ["주민등록번호", "VARCHAR2(13)", "#f60000", true],
  ["주소", "VARCHAR2(255)", "#0000f0", false],
  ["웹주소", "VARCHAR2(255)", "#fff", false],
  ["전화번호", "VARCHAR2(30)", "#f60000", true],
  ["이메일", "VARCHAR2(40)", "#f60000", true],
  ["이름", "VARCHAR2(50)", "#f60000", true],
  ["숫자", "INTEGER", "#000", false],
];
const Domain = () => (
  <Panel $h={195}>
    <Head>
      <Tab $w={76}><Icon n="domain" /><b>도메인</b><CloseX /></Tab>
      <Curve />
      <HeadRest>
        <IdleTab $w={47} $ml={-11}><Icon n="check" />검토</IdleTab>
        <IdleTab $w={52}><Slot $g={4}><Icon n="console" /></Slot>콘솔</IdleTab>
        <Slot $g={1162} $w={18}><Sort off /></Slot><Slot $g={5} $w={18}><Sort rev off /></Slot>
        <MinMax />
      </HeadRest>
    </Head>
    <DomainFrame>
      <DomainTable>
        <DomainHead><span>이름</span><span>데이터 타입</span><span>기본 값</span><span>주석</span></DomainHead>
        {domainRows.map(([name, type, c, up], i) => (
          <DomainRow key={name} $sel={i === 3}>
            <NameCell $root={i === 0 || i === 7} $sel={i === 3}>
              {i === 0 || i === 7 ? <Expander /> : <TreeLead />}
              <Icon n="domain" />{name}
            </NameCell>
            <TypeCell $c={c}><svg width="10" height="6" viewBox="0 0 10 6">{up && <path d="M0 5.500H10L5 0.500Z" fill="#2f9e3f" />}</svg>{type}</TypeCell>
            <span /><span /><span />
          </DomainRow>
        ))}
      </DomainTable>
      <Track>
        <ArrowSlot $h={19}><Arrow d="up" /></ArrowSlot>
        <Thumb $len={66} $at={0}><ThumbGrip /></Thumb>
        <ArrowSlot $h={17} $end><Arrow d="down" /></ArrowSlot>
      </Track>
    </DomainFrame>
  </Panel>
);

/* ---------- right column ---------- */

const thumbRects = [
  [52, 6, 39, 51], [110, 14, 34, 34], [170, 14, 34, 34], [220, 6, 39, 51], [108, 67, 39, 44], [7, 84, 34, 10], [169, 76, 35, 27], [7, 133, 34, 17],
  [54, 130, 35, 24], [110, 122, 35, 40], [222, 121, 35, 75], [7, 170, 36, 28], [55, 170, 36, 28], [103, 172, 51, 24], [165, 172, 46, 24],
];
const ThumbFrame = styled.div`
  width: 272px; height: 203px; margin: 3px 0 0 2px; border: 1px solid #000; background: #fff; overflow: hidden;
`;
const Thumbnail = () => (
  <Panel $h={232}>
    <Head>
      <Tab $w={73}><Icon n="monitor" /><b>썸네일</b><CloseX /></Tab>
      <Curve />
      <HeadRest><MinMax /></HeadRest>
    </Head>
    <ThumbFrame>
      <svg width="270" height="201" viewBox="1 1 270 201" fill="none">
        {thumbRects.map(([x, y, w, h], i) => <rect key={i} x={x + 0.5} y={y + 0.5} width={w} height={h} stroke="#7a1a1e" fill="#fff" />)}
        <g stroke={BROWN} strokeDasharray="3 2" strokeWidth="1.100">
          <path d="M92 32H110M204 32H220M92 52L107 70M127 49V67M167 49L148 71M219 41L148 81M24 95V133M27 95L42 133V152L31 170M24 151V170M107 108L84 130M127 112V122M58 156L40 170M110 149L44 176" />
          <path d="M216 41H221M165 49H169M125 50H130M125 121H130M22 97H30M22 132H26M22 168H25M30 168H34M38 168H42M44 175H48M82 129H87M106 32H110" strokeWidth="2.500" strokeDasharray="none" />
        </g>
        <g stroke="#2d5a2c" strokeWidth="1.100">
          <path d="M42 90.500H108M148 90.500H169M146 145L222 156M110 155L91 167V170M128 163V172M146 155L170 172" />
          <path d="M42 90.500H46M166 90.500H169M90 168H93M126 170H130M168 170H172M219 156H222" strokeWidth="2.500" />
        </g>
        <rect x="1.500" y="76.500" width="269" height="125" fill="#3399ff" fillOpacity=".22" stroke="#3399ff" strokeWidth="1.200" />
      </svg>
    </ThumbFrame>
  </Panel>
);

const Tree = styled.div`margin-top: -1px; font-family: ${GULIM}; letter-spacing: 0.33px;`;
const TreeRow = styled.div<{ $d: number }>`
  height: 17px; display: flex; align-items: center; gap: 4px; padding-left: ${(p) => p.$d}px; line-height: 16px;
`;
const SchemaNode = styled.div`
  height: 17px; width: 84px; margin-left: 39px; padding-left: 3px; display: flex; align-items: center; gap: 6px; border: 1px solid #d5d5d5; border-radius: 3px;
  background: linear-gradient(#fafafa, #eaeaea); font-weight: 700; line-height: 15px; letter-spacing: 0.8px;
  > i { transform: skewX(-12deg); font-style: normal; }
`;
const Model = () => (
  <Panel $h={700}>
    <Head>
      <Tab $w={61}><Icon n="model" /><b>모델</b><CloseX /></Tab>
      <Curve />
      <HeadRest>
        <IdleTab $w={71} $ml={-7}><Icon n="outline" />아웃라인</IdleTab>
        <MinMax />
      </HeadRest>
    </Head>
    <ViewBar $h={26}>
      <Slot $g={194}><Icon n="lgrid" /></Slot><Caret $g={6} /><Slot $g={7} $w={18}><Sort /></Slot><Slot $g={5} $w={18}><Sort rev /></Slot>
    </ViewBar>
    <White>
      <Tree>
        <TreeRow $d={22}><Icon n="area" />업무영역(1)</TreeRow>
        <TreeRow $d={41}><Icon n="areaOk" />기본 업무영역</TreeRow>
        <TreeRow $d={22}><Icon n="database" />새 데이터베이스 : Oracle 9i/10g/11g/12c</TreeRow>
        <SchemaNode><Icon n="schemaOk" /><i>내 스키마</i></SchemaNode>
        {["테이블(20)", "뷰(0)", "펑션(0)", "프로시저(0)"].map((s) => <TreeRow key={s} $d={61}><Icon n="folder" />{s}</TreeRow>)}
      </Tree>
      <Track $h>
        <Slot $g={0}><Arrow d="left" /></Slot>
        <Thumb $h $len={230} $at={2}><ThumbGrip $h /></Thumb>
        <Slot $g={8}><Arrow d="right" /></Slot>
      </Track>
    </White>
  </Panel>
);

/* ---------- left column ---------- */

const Navigator = () => (
  <Panel $h={279}>
    <Head>
      <Tab $w={97}><Icon n="navigator" /><b>네비게이터</b><CloseX /></Tab>
      <Curve />
      <HeadRest><MinMax /></HeadRest>
    </Head>
    <ViewBar $h={26}>
      <Tool n="backOff" g={37} /><Tool n="fwdOff" /><Tool n="upOff" /><Sep $g={5} /><Tool n="collapse" g={9} /><Tool n="link" g={6} />
      <Slot $g={9} $w={10}><svg width="10" height="16"><path d="M.5 2.500H9.500L5 7Z" fill="#fff" stroke="#666" /></svg></Slot>
    </ViewBar>
    <White><FinalNode><Icon n="folderOpen" />final</FinalNode></White>
  </Panel>
);
const Palette = () => (
  <Panel $h={652}>
    <Head>
      <Tab $w={75} $ls={-0.5} $x={6}><Icon n="paletteRound" /><b>Palette</b><CloseX /></Tab>
      <Curve />
      <HeadRest><MinMax /></HeadRest>
    </Head>
    <White $bare>
      <Drawer $h={71}>
        <DrawerHead><Icon n="folder" /><b>일반</b><Icon n="pin" s={12} /><Slot $g={0} $w={3} /></DrawerHead>
        <PaletteItem><Icon n="cursor" />선택</PaletteItem>
        <PaletteItem><Icon n="hand" />패닝</PaletteItem>
      </Drawer>
      <Drawer $h={200}>
        <DrawerHead><Icon n="folder" /><b>생성 도구</b><Icon n="chevrons" s={12} /><Slot $g={0} $w={3} /></DrawerHead>
        <PaletteItem><Icon n="table" />테이블</PaletteItem>
        <PaletteItem><Icon n="relNon" />비식별 관계</PaletteItem>
        <PaletteItem><Icon n="relId" />식별 관계</PaletteItem>
        <PaletteItem><Icon n="note" />노트</PaletteItem>
      </Drawer>
    </White>
  </Panel>
);

/* ---------- status bar and taskbar ---------- */

const Status = styled.footer`
  height: 30px; display: flex; align-items: center; letter-spacing: -0.15px; padding-bottom: 3px;
  > b { font-weight: 400; margin-left: 45px; flex: 1; }
`;
const Taskbar = styled.div`
  height: 40px; display: flex; border-top: 1px solid #23303f; box-shadow: inset 0 1px 0 #d6e1ee;
  background: linear-gradient(90deg, #8497ae 0 58px, #a7c0dc 62px 1498px, #8497ae 1530px);
`;
const StartCell = styled.div`width: 60px; display: flex; align-items: center; padding-left: 8px;`;
const TaskStack = styled.div`
  width: 59px; margin-right: 3px; display: flex;
`;
const TaskEdge = styled.i`
  width: 4px; border: 1px solid #4a6280; border-left-color: #d6e1ee; border-radius: 0 3px 3px 0; background: #b4c8e0;
`;
const TaskButton = styled.div<{ $on?: boolean }>`
  flex: 1; display: flex; align-items: center; justify-content: center; border: 1px solid #3e5570; border-radius: 3px;
  box-shadow: inset 0 0 0 1px rgba(255, 255, 255, 0.6);
  background: ${(p) => (p.$on ? "linear-gradient(135deg, #fff, #e4ebf4 60%, #d5e0ee)" : "linear-gradient(135deg, #d7e2ef, #b9cde4 50%, #a9c1de 52%, #b6cbe4)")};
`;
const EclipseTile = styled.div`
  width: 32px; height: 32px; display: grid; place-items: center; background: linear-gradient(#5d3560, #35246e);
  > * { grid-area: 1 / 1; }
  > b { z-index: 1; font: 9px/9px "Liberation Sans", sans-serif; letter-spacing: -0.3px; color: #ff9a2b; text-align: center; text-shadow: 0 0 1px #2b1a3c, 0 0 2px #2b1a3c, 0 0 3px #2b1a3c; white-space: pre; }
`;
const TalkTile = styled.div`
  width: 32px; height: 32px; background: #fae100; display: grid; place-items: center;
  > * { grid-area: 1 / 1; }
  > b { z-index: 1; font: 800 8px/8px "Open Sans", sans-serif; color: #fae100; margin-top: -2px; }
`;
const Tray = styled.div`
  margin-left: auto; width: 379px; display: flex; align-items: center; color: #fff;
`;
const TrayGlyph = styled.span<{ $s: number; $g: number; $w: number }>`
  width: ${(p) => p.$w}px; margin-left: ${(p) => p.$g}px; font: ${(p) => p.$s}px/24px "Noto Sans CJK TC", sans-serif; text-align: center; margin-top: -6px;
`;
const Raise = styled.span<{ $g: number }>`display: flex; margin: -4px 0 0 ${(p) => p.$g}px; width: 16px;`;
const Clock = styled.div`
  width: 84px; margin-left: 12px; text-align: center; font-size: 12px; line-height: 17px; letter-spacing: 0; padding-bottom: 0;
`;
const ShowDesktop = styled.div`
  margin-left: auto; align-self: stretch; width: 14px; border: 1px solid #3a4a5e; box-shadow: inset 0 0 0 1px #a9b8ca; background: linear-gradient(135deg, #a5b4c7, #5d6f87);
`;

const taskIcons: React.ReactNode[] = [
  <EclipseTile>
    <svg width="32" height="32" viewBox="0 0 32 32"><circle cx="16" cy="16" r="11" fill="#2b2030" stroke="#e8e8e8" strokeWidth="3.500" /><circle cx="16" cy="16" r="13.500" fill="none" stroke="#d8d8d8" strokeWidth="3.500" strokeDasharray="4 4.500" /></svg>
    <b>{"Java EE\nIDE"}</b>
  </EclipseTile>,
  <svg width="30" height="30" viewBox="0 0 30 30">
    <circle cx="15" cy="15" r="14.500" fill="#3fa35a" />
    <path d="M2.500 7.500A14.500 14.500 0 0 1 28 9H15L9 18Z" fill="#cf4539" />
    <path d="M28 9A14.500 14.500 0 0 1 14 29.500L21 18L18 9Z" fill="#f6d048" />
    <circle cx="15" cy="15" r="6.800" fill="#fff" /><circle cx="15" cy="15" r="5.300" fill="#4a86e8" />
  </svg>,
  <svg width="34" height="30" viewBox="0 0 34 30">
    <path d="M1 19L6 3L20 8L14 22Z" fill="#a4dc9c" /><path d="M9 24L10 7L25 9L22 25Z" fill="#a9d8f8" /><path d="M13 11L28 6L33 20L18 26Z" fill="#f8e27a" stroke="#e0c245" strokeWidth=".6" />
  </svg>,
  <svg width="32" height="30" viewBox="0 0 32 30">
    <path d="M24 3L31 5L30 28L22 27Z" fill="#a78f6c" /><path d="M10 2L26 3L24 27L22 28L2 23Z" fill="#f2f6f8" /><path d="M10 4L26 5L20 25L1 21Z" fill="#5cabc0" /><path d="M10 4L20 4.500L6 22L1 21Z" fill="#8fcddc" />
    <path d="M10 2.500H27" stroke="#666" strokeWidth="2" strokeDasharray="1 1" />
  </svg>,
  <svg width="32" height="30" viewBox="0 0 32 30">
    <path d="M2 26V3H13L15 6H30V26Z" fill="#f3dc8c" stroke="#c9a64c" /><path d="M4 9H31V27H2Z" fill="#fbeeb2" stroke="#d7b765" />
    <rect x="4" y="1.500" width="4" height="2" fill="#3a9a3a" /><rect x="12" y="3" width="4" height="2" fill="#d33" /><rect x="21" y="5" width="5" height="2" fill="#38c" />
    <path d="M6 29V18Q6 16 8 16H26Q28 16 28 18V29H23V21H11V29Z" fill="#8ed0ee" stroke="#4a9dc8" />
  </svg>,
  <svg width="32" height="32" viewBox="0 0 32 32">
    <rect x="2" y="1" width="24" height="30" rx="2" fill="#fff" stroke="#7a1a1e" strokeWidth="2" /><rect x="2" y="1" width="24" height="12" fill="#86181e" /><path d="M3 12H25" stroke="#5e0a10" strokeWidth="2" />
    <path d="M13 27L16 20L27 11L30 14L20 25Z" fill="#9a8d5a" stroke="#4c452a" />
    <path d="M19 21L25 19L31 21V26Q30 30 25 32Q20 30 19 26Z" fill="#f6c92e" stroke="#999" /><path d="M19 21L25 19V25.500H19ZM25 25.500H31Q30 30 25 32Z" fill="#2b7ad0" />
  </svg>,
  <svg width="28" height="32" viewBox="0 0 28 32">
    <path d="M6 11H25L27 26Q24 30 19 27L12 31L7 26L3 19L6 17Z" fill="#e8a818" stroke="#4a2e08" />
    <path d="M2 1L5 9H24L27 1L23.500 3L20 1L17 4L14.500 1L12 4L9 1L6 3Z" fill="#d62424" stroke="#5a0a0a" /><rect x="5" y="8" width="19" height="3" fill="#f0c020" stroke="#533" strokeWidth=".7" />
    <path d="M6 12H17L16 21L8 21L4 18Z" fill="#fbe9d0" /><path d="M8 14.500H11M13.500 14.500H16" stroke="#222" strokeWidth="1.300" />
    <path d="M5 22L16 20L13 29L8 27Z" fill="#b87812" /><path d="M19 14Q23 18 20 25M22 13Q26 19 23 26" stroke="#8a5a0c" fill="none" />
  </svg>,
  <svg width="34" height="30" viewBox="0 0 34 30">
    <path d="M2 28L5 25L1 17Q3 11 9 13Q10 5 15 4Q18 -1 21 4Q25 5 24 10Q33 13 30 23L33 28H23L20 25L11 28Z" fill="#3a9a3c" stroke="#0e3c14" /><path d="M8 21Q10 14 20 13Q27 17 23 24L14 26Z" fill="#c7d96a" />
    <circle cx="16" cy="5.500" r="1.800" fill="#f4f08a" stroke="#123" /><path d="M12 10Q18 12 23 9M3 19L9 25M29 18L25 25" stroke="#0e3c14" fill="none" />
  </svg>,
  <svg width="32" height="32" viewBox="0 0 32 32">
    <circle cx="16" cy="16" r="15.500" fill="#6db33f" /><path d="M26 5Q30 17 25 22Q19 28 8 25Q3 16 10 12Q21 10 26 5Z" fill="#fff" /><path d="M7 26Q18 23 23 13" stroke="#6db33f" strokeWidth="1.500" fill="none" />
  </svg>,
  <svg width="30" height="28" viewBox="0 0 30 28">
    <rect x="1.500" y="1.500" width="27" height="25" fill="#2a0d0c" stroke="#e2231a" strokeWidth="3" /><path d="M7 21Q14 16 15 8Q14 4 13 7Q13 13 20 17Q25 18 22 15.500Q17 15 9 19" fill="none" stroke="#fff" strokeWidth="1.400" />
  </svg>,
  <TalkTile>
    <svg width="32" height="32" viewBox="0 0 32 32"><path d="M16 5C24 5 29 9 29 15S24 24 16 24L10 28L11 23C6 22 3 19 3 15S8 5 16 5Z" fill="#3b1e1e" /></svg>
    <b>TALK</b>
  </TalkTile>,
  <svg width="34" height="32" viewBox="0 0 34 32">
    <path d="M2 17Q4 7 15 6Q27 5 29 14Q30 26 20 27Q14 28 14 23Q13 20 9 24Q2 25 2 17Z" fill="#cfe2f0" stroke="#7ba4c4" />
    <circle cx="7" cy="17" r="2.500" fill="#e05040" /><circle cx="12" cy="12" r="2.500" fill="#6abf4b" /><circle cx="18" cy="10" r="2.500" fill="#f0b030" /><circle cx="15" cy="18" r="2.500" fill="#6fb4e0" />
    <path d="M17 31L27 9" stroke="#e98a2c" strokeWidth="3" /><path d="M26 9L28 2L33 2L31 8L28 11Z" fill="#b5895a" />
  </svg>,
  <svg width="32" height="28" viewBox="0 0 32 28">
    <rect x="3" y="3" width="26" height="22" fill="#7cc0f2" stroke="#fff" strokeWidth="1.500" /><path d="M4 9Q14 5 28 9V4H4Z" fill="#d8eefa" /><path d="M4 18Q10 9 16 14T28 17V24H4Z" fill="#3f7f68" /><rect x="4" y="18" width="24" height="6" fill="#4a94c0" />
    <path d="M1 7V1H7M25 1H31V7M31 21V27H25M7 27H1V21" stroke="#2a76c0" strokeWidth="2.500" fill="none" />
  </svg>,
  <svg width="32" height="32" viewBox="0 0 32 32">
    <path d="M8 4H28V29H9Z" fill="#fff" stroke="#111" /><path d="M27 3L29 4V28" stroke="#a22" strokeWidth="2" fill="none" /><path d="M8 2H27L20 16H2Z" fill="#c93a44" stroke="#111" strokeWidth="1.300" /><path d="M9 2H27" stroke="#111" strokeWidth="2.500" strokeDasharray="2 1" />
    <path d="M11 19H22M11 22H20M11 25H17" stroke="#aaa" /><path d="M20 24V31M16.500 27.500H23.500" stroke="#48a848" strokeWidth="3" /><path d="M27 24V31M23.500 27.500H30.500" stroke="#e8b818" strokeWidth="3" />
  </svg>,
];
const stacked = [3, 9, 10];

const TrayIcons = () => (
  <>
    <Raise $g={0}>
      <svg width="16" height="18" viewBox="0 0 16 18"><circle cx="7.500" cy="7.500" r="6.800" fill="#4b8fc4" /><path d="M2 5Q6 0 10 2L9 7L4 10ZM10 7L14 6L12 11Z" fill="#6ab855" /><path d="M7 16L13 8L16 10L10 17Z" fill="#f4e0b0" stroke="#b5722a" /></svg>
    </Raise>
    <TrayGlyph $s={20} $g={2} $w={20}>A</TrayGlyph>
    <TrayGlyph $s={16} $g={0} $w={18}>漢</TrayGlyph>
    <Raise $g={5}>
      <svg width="16" height="16" viewBox="0 0 16 16"><circle cx="8" cy="8" r="7" fill="#1226a8" stroke="#dde" strokeWidth="1.200" /><path d="M5.800 6.200Q5.800 4 8 4Q10.400 4 10.200 6.200Q10 7.500 8 8.400V9.600M8 11V12.600" stroke="#fff" strokeWidth="1.700" fill="none" /></svg>
    </Raise>
    <Slot $g={12} $w={9}>
      <svg width="9" height="24" viewBox="0 3 9 24"><path d="M.5 6.500H5.500V9.500H.5ZM3 5.500V3.500H8.500V7.500H6" stroke="#fff" fill="none" /><path d="M1.500 16H6.500L4 19Z" fill="#fff" /></svg>
    </Slot>
    <Slot $g={10}><svg width="16" height="16" viewBox="0 0 16 16"><rect width="16" height="16" fill="#fae100" /><path d="M8 3C12 3 14.500 5 14.500 7.500S12 12 8 12L5 14L5.500 11.500C3 11 1.500 9.500 1.500 7.500S4 3 8 3Z" fill="#3b1e1e" /></svg></Slot>
    <Slot $g={8}><svg width="16" height="16" viewBox="0 0 16 16"><path d="M0 1H4L6 9L9 0H12L6 15.500H4Z" fill="#3fd23f" stroke="#116611" strokeWidth=".7" /><path d="M9.500 4L16 2L13 7L15 10L8 16L11 10L9 8Z" fill="#3fd23f" stroke="#116611" strokeWidth=".7" /></svg></Slot>
    <Slot $g={8}><svg width="16" height="16" viewBox="0 0 16 16"><rect width="16" height="16" rx="1.500" fill="#e2711d" /><path d="M4 8H11V11Q8 13 5 11ZM11 8.500H13V10H11M3 13.500H13M7 7Q5 5 8 4T8 2" stroke="#fff" fill="none" /></svg></Slot>
    <Slot $g={8}><svg width="16" height="16" viewBox="0 0 16 16"><rect width="16" height="16" rx="1.500" fill="#2b8ad0" /><path d="M3 3H7V7H3ZM9 2H13V6H9ZM4 9V13H8M10 8H14V13H10ZM10 10.500H14" stroke="#fff" fill="none" /></svg></Slot>
    <Slot $g={8}><svg width="16" height="16" viewBox="0 0 16 16"><path d="M2 0V16" stroke="#fff" strokeWidth="1.600" /><path d="M3 2Q6 0 8 3T13 3V10Q10 11 8 9T3 9Z" fill="#8fa0b4" stroke="#fff" /><circle cx="11" cy="11" r="4.500" fill="#d62a22" stroke="#fff" strokeWidth=".6" /><path d="M9 9L13 13M13 9L9 13" stroke="#fff" strokeWidth="1.500" /></svg></Slot>
    <Slot $g={8}><svg width="16" height="16" viewBox="0 0 16 16"><rect x="5" y="4" width="10" height="8" fill="#6d7f95" stroke="#fff" strokeWidth="1.300" /><path d="M7 14.500H13M1 1V5H5V1M3 5V14H5" stroke="#fff" strokeWidth="1.300" fill="none" /></svg></Slot>
    <Slot $g={8}><svg width="16" height="16" viewBox="0 0 16 16"><path d="M1 6H3L8 1V15L3 10H1Z" fill="#8fa0b4" stroke="#fff" /><circle cx="11.500" cy="11" r="4" fill="#d62a22" stroke="#fff" /><path d="M9 9L14 13" stroke="#fff" strokeWidth="1.400" /></svg></Slot>
  </>
);

const TaskbarView = () => (
  <Taskbar>
    <StartCell>
      <svg width="38" height="38" viewBox="0 0 38 38">
        <defs><radialGradient id="orb" cx=".5" cy=".9" r=".9"><stop offset="0" stopColor="#3ad4f8" /><stop offset=".45" stopColor="#1c6fa8" /><stop offset="1" stopColor="#9ab4cc" /></radialGradient></defs>
        <circle cx="19" cy="19" r="17.500" fill="url(#orb)" stroke="#2a4a68" />
        <path d="M10 11Q15 8 19 11L17 18.500Q13 16 8 19Z" fill="#e8582c" /><path d="M20.500 12Q25 14 30 11L28 19Q23 22 18.500 19Z" fill="#8cc63c" />
        <path d="M7.500 20.500Q12 18 16.500 20.500L14.500 28Q10 25.500 5.500 27.500Z" fill="#4a9ee8" /><path d="M18 21Q23 24 27.500 21L25.500 29Q20 31.500 16 28.500Z" fill="#f8c83c" />
      </svg>
    </StartCell>
    {taskIcons.map((icon, i) => (
      <TaskStack key={i}>
        <TaskButton $on={i === 5}>{icon}</TaskButton>
        {stacked.includes(i) && <><TaskEdge /><TaskEdge /></>}
      </TaskStack>
    ))}
    <Tray>
      <TrayIcons />
      <Clock>오후 7:22<br />2016-08-24</Clock>
      <ShowDesktop />
    </Tray>
  </Taskbar>
);

const menus: [string, string, number][] = [["파일(", "F", 52], ["편집(", "E", 52], ["탐색(", "N", 55], ["검색(", "A", 54], ["프로젝트(", "P", 77], ["eXERD", "", 49], ["창(", "W", 45], ["도움말(", "H", 60]];

export default function App() {
  return (
    <Window>
      <Global />
      <TitleBar>
        <Icon n="exerd" /><span>eXERD - final/first.exerd - eXERD</span>
        <WinButton><svg width="12" height="10"><rect x="1" y="5" width="10" height="4" fill="#fff" stroke="#556" /></svg></WinButton>
        <WinButton><svg width="13" height="12"><path d="M4.500 1.500H11.500V7.500H4.500Z M1.500 4.500H8.500V10.500H1.500ZM4 7H6V8H4Z" fill="#fff" stroke="#556" /></svg></WinButton>
        <WinButton $close><svg width="13" height="11"><path d="M3 2L10 9M10 2L3 9" stroke="#445" strokeWidth="4.500" /><path d="M3 2L10 9M10 2L3 9" stroke="#fff" strokeWidth="2.600" /></svg></WinButton>
      </TitleBar>
      <MenuBar>
        {menus.map(([label, key, w]) => <MenuItem key={label} $w={w}>{label}{key && <><u>{key}</u>)</>}</MenuItem>)}
      </MenuBar>
      <MainBar>
        <GripLine $g={5} /><Tool n="newWizard" g={8} /><Caret $g={6} /><Tool n="save" /><Tool n="printer" />
        <GripLine $g={11} /><Tool n="torch" g={8} /><Caret $g={6} />
        <GripLine $g={11} /><Tool n="backEdit" /><Tool n="back" g={8} /><Caret $g={6} /><Tool n="fwdOff" g={8} /><Caret $g={6} $off />
        <PerspectiveBar>
          <svg width="172" height="34" viewBox="0 0 172 34"><path d="M0 30.500H126C146 30.500 144 3.500 164 3.500H172" fill="none" stroke="#fff" strokeWidth="1.200" /></svg>
          <Icon n="perspective" />
          <PerspectiveButton><Icon n="exerd" />eXERD</PerspectiveButton>
        </PerspectiveBar>
      </MainBar>
      <Workbench>
        <Column $w={180} $gap={4}><Navigator /><Palette /></Column>
        <Column $w={1447} $ml={4} $gap={3}><Editor /><Domain /></Column>
        <Column $w={278} $ml={3} $gap={3}><Thumbnail /><Model /></Column>
      </Workbench>
      <Status>
        <GripLine $g={5} /><Tool n="statusNew" g={8} /><b>다이어그램 : Diagram</b><GripLine $g={0} /><Slot $g={0} $w={285} />
      </Status>
      <TaskbarView />
    </Window>
  );
}
